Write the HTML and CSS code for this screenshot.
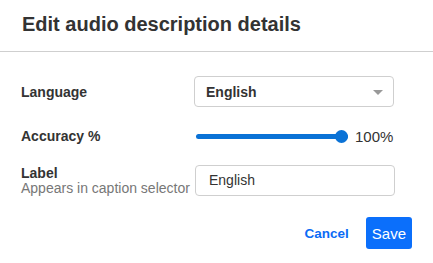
FILE: index.html
```html
<!DOCTYPE html>
<html lang="en">
<head>
    <meta charset="UTF-8">
    <meta name="viewport" content="width=device-width, initial-scale=1.0">
    <title>Edit audio description details</title>
    <link rel="stylesheet" href="styles.css">
</head>
<body>
    <div class="dialog">
        <div class="dialog-header">
            <h1>Edit audio description details</h1>
        </div>
        <form class="dialog-body">
            <div class="field">
                <label for="language">Language</label>
                <div class="select-wrap">
                    <select id="language">
                        <option>English</option>
                        <option>French</option>
                        <option>Spanish</option>
                    </select>
                    <span class="select-arrow"></span>
                </div>
            </div>

            <div class="field">
                <label for="accuracy">Accuracy %</label>
                <div class="range-wrap">
                    <input type="range" id="accuracy" min="0" max="100" value="100">
                    <span class="range-value">100%</span>
                </div>
            </div>

            <div class="field">
                <label for="label">Label<span class="hint">Appears in caption selector</span></label>
                <input type="text" id="label" class="text-input" value="English">
            </div>

            <div class="actions">
                <button type="button" class="btn-link">Cancel</button>
                <button type="submit" class="btn-primary">Save</button>
            </div>
        </form>
    </div>
</body>
</html>
```

FILE: styles.css
```css
body {
    margin: 0;
    font-family: "Liberation Sans", Arial, sans-serif;
    background: #fff;
    color: #333;
}
.dialog {
    width: 433px;
}
.dialog-header {
    padding: 12px 22px 15px;
    border-bottom: 1px solid #cfcfcf;
}
h1 {
    margin: 0;
    font-size: 20px;
    line-height: 24px;
    font-weight: bold;
    color: #333;
}
.dialog-body {
    padding: 24px 21px 0 21px;
    display: flex;
    flex-direction: column;
}
.field {
    display: grid;
    grid-template-columns: 173px 200px;
    align-items: center;
    margin-bottom: 18px;
}
.field label {
    padding-top: 2px;
    font-size: 14px;
    line-height: 15px;
    font-weight: bold;
    color: #333;
}
.hint {
    display: block;
    font-weight: normal;
    color: #777;
}
.select-wrap {
    position: relative;
}
select {
    -webkit-appearance: none;
    appearance: none;
    width: 200px;
    height: 31px;
    padding: 0 11px;
    border: 1px solid #cfcfcf;
    border-radius: 4px;
    background: #fff;
    font-family: inherit;
    font-size: 14px;
    font-weight: bold;
    color: #333;
}
.select-arrow {
    position: absolute;
    right: 11px;
    top: 14px;
    border-left: 5px solid transparent;
    border-right: 5px solid transparent;
    border-top: 5px solid #999;
}
.range-wrap {
    display: flex;
    align-items: center;
    height: 20px;
    padding-top: 1px;
}
input[type="range"] {
    -webkit-appearance: none;
    appearance: none;
    width: 152px;
    margin: 0 0 0 2px;
    background: transparent;
}
input[type="range"]::-webkit-slider-runnable-track {
    height: 5px;
    border-radius: 3px;
    background: #0a72d6;
}
input[type="range"]::-webkit-slider-thumb {
    -webkit-appearance: none;
    width: 13px;
    height: 13px;
    margin-top: -4px;
    border-radius: 50%;
    background: #0a72d6;
}
.range-value {
    margin-left: 7px;
    font-size: 15px;
    color: #333;
}
.text-input {
    box-sizing: border-box;
    width: 200px;
    height: 31px;
    margin-left: 1px;
    padding: 0 13px;
    border: 1px solid #cfcfcf;
    border-radius: 4px;
    font-family: inherit;
    font-size: 14px;
    color: #333;
}
.actions {
    display: flex;
    justify-content: flex-end;
    align-items: center;
    gap: 17px;
    margin-top: 3px;
}
.btn-link {
    padding: 0;
    border: none;
    background: none;
    font-family: inherit;
    font-size: 13.5px;
    font-weight: bold;
    color: #0b6bf5;
    cursor: pointer;
}
.btn-primary {
    height: 32px;
    padding: 0 6px;
    border: none;
    border-radius: 3px;
    background: #0b6ffb;
    font-family: inherit;
    font-size: 15px;
    color: #fff;
    cursor: pointer;
}
```
